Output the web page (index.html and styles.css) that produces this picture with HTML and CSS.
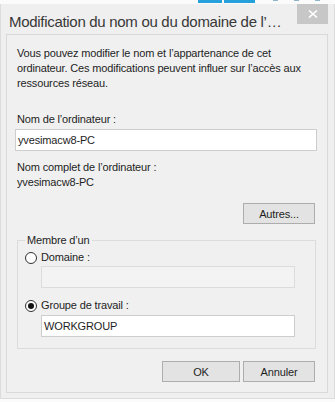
FILE: index.html
```html
<!DOCTYPE html>
<html lang="fr">
<head>
    <meta charset="UTF-8">
    <meta name="viewport" content="width=device-width, initial-scale=1.0">
    <title>Modification du nom ou du domaine de l'ordinateur</title>
    <link rel="stylesheet" href="styles.css">
</head>
<body>
    <div class="desktop">
        <span class="tile"></span>
        <span class="tile wide"></span>
        <span class="dot"></span>
        <span class="dot"></span>
        <span class="dot"></span>
    </div>
    <div class="window">
        <div class="titlebar">
            <span class="title">Modification du nom ou du domaine de l’…</span>
            <span class="close">
                <svg width="10" height="8" viewBox="0 0 10 8"><path d="M1 0.5 L9 7.5 M9 0.5 L1 7.5" stroke="#fff" stroke-width="1.6"/></svg>
            </span>
        </div>
        <div class="client">
            <p class="intro">Vous pouvez modifier le nom et l’appartenance de cet<br>ordinateur. Ces modifications peuvent influer sur l’accès aux<br>ressources réseau.</p>

            <div class="label first">Nom de l’ordinateur :</div>
            <div class="field">yvesimacw8-PC</div>

            <div class="label gap">Nom complet de l’ordinateur :</div>
            <div class="label">yvesimacw8-PC</div>

            <div class="row-end more">
                <button class="btn">Autres...</button>
            </div>

            <fieldset class="group">
                <legend>Membre d’un</legend>
                <div class="option">
                    <span class="radio"></span>
                    <span>Domaine :</span>
                </div>
                <div class="field sub disabled"></div>
                <div class="option second">
                    <span class="radio checked"></span>
                    <span>Groupe de travail :</span>
                </div>
                <div class="field sub">WORKGROUP</div>
            </fieldset>

            <div class="row-end actions">
                <button class="btn ok">OK</button>
                <button class="btn">Annuler</button>
            </div>
        </div>
    </div>
</body>
</html>
```

FILE: styles.css
```css
:root {
    --frame-color: #efefef; /* window frame */
    --client-color: #f0f0f0; /* dialog surface */
    --line-color: #d9d9d9; /* thin borders */
    --text-color: #1e1e1e;
    --tile-color: #26a0da; /* desktop tiles behind the dialog */
}
body {
    margin: 0;
    width: 335px;
    height: 402px;
    overflow: hidden;
    background: #fbfbfb;
    font-family: "Segoe UI", "Liberation Sans", Arial, sans-serif;
    font-size: 11px;
    letter-spacing: -0.15px;
    line-height: 15px;
    color: var(--text-color);
}
.desktop {
    display: flex;
    align-items: flex-start;
    height: 4px;
    padding-left: 198px;
    gap: 2px;
}
.tile {
    width: 24px;
    height: 3px;
    background: var(--tile-color);
}
.tile.wide {
    width: 31px;
    margin-right: 16px;
}
.dot {
    width: 5px;
    height: 1px;
    margin-right: 14px;
    background: #8fb6cc;
}
.window {
    box-sizing: border-box;
    width: 335px;
    height: 395px;
    background: var(--frame-color);
    border: 1px solid #dcdcdc;
    border-top: none;
}
.titlebar {
    display: flex;
    align-items: flex-start;
    height: 30px;
    padding-left: 8px;
}
.title {
    flex: 1;
    margin-top: 9px;
    font-size: 15px;
    letter-spacing: -0.3px;
    line-height: 18px;
    color: #383838;
    white-space: nowrap;
}
.close {
    display: flex;
    align-items: center;
    justify-content: center;
    width: 31px;
    height: 20px;
    margin-right: 6px;
    background: #c7c7c7;
}
.client {
    margin: 0 6px 0 5px;
    padding: 0 10px 10px 8px;
    background: var(--client-color);
    border: 1px solid var(--line-color);
}
.intro {
    margin: 11px 0 0 2px;
    white-space: nowrap;
}
.label {
    margin-left: 2px;
    white-space: nowrap;
}
.label.first {
    margin-top: 21px;
}
.label.gap {
    margin-top: 9px;
}
.field {
    box-sizing: border-box;
    height: 22px;
    margin-top: 2px;
    padding: 3px 2px 0;
    background: #fff;
    border: 1px solid #cdcdcd;
}
.field.sub {
    width: 254px;
    margin-left: 16px;
}
.field.disabled {
    margin-top: 1px;
    background: #f3f3f3;
    border-color: #dcdcdc;
}
.row-end {
    display: flex;
    justify-content: flex-end;
    gap: 3px;
    padding-right: 2px;
}
.more {
    margin-top: 13px;
}
.btn {
    box-sizing: border-box;
    width: 72px;
    height: 21px;
    padding: 0;
    background: #e3e3e3;
    border: 1px solid #adadad;
    font-family: inherit;
    font-size: 11px;
    letter-spacing: -0.15px;
    color: var(--text-color);
}
.btn.ok {
    width: 78px;
}
.group {
    margin: 9px 1px 0 2px;
    padding: 0 7px 11px 7px;
    border: 1px solid #dcdcdc;
}
.group legend {
    padding: 0 2px;
}
.option {
    display: flex;
    align-items: center;
    gap: 4px;
    margin-top: 2px;
}
.option.second {
    margin-top: 10px;
}
.radio {
    box-sizing: border-box;
    display: flex;
    align-items: center;
    justify-content: center;
    width: 12px;
    height: 12px;
    border: 1px solid #333;
    border-radius: 50%;
    background: #fdfdfd;
}
.radio.checked::after {
    content: "";
    width: 6px;
    height: 6px;
    border-radius: 50%;
    background: #111;
}
.actions {
    margin-top: 12px;
}
```
